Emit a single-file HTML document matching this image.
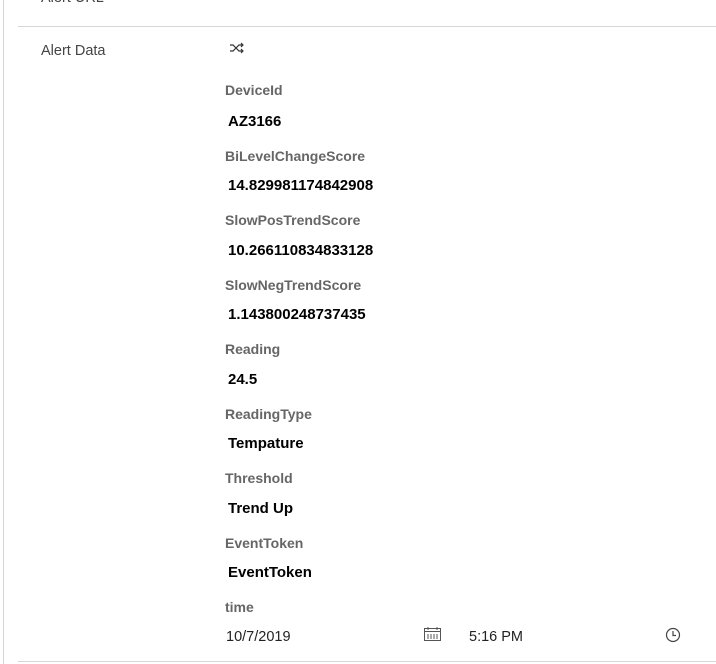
<!DOCTYPE html>
<html><head><style>
body{margin:0;width:716px;height:664px;background:#fff;font-family:"Liberation Sans",sans-serif;position:relative;overflow:hidden}
.a{position:absolute;white-space:nowrap;line-height:16px}
.l{left:225px;font-size:14px;color:#666;font-weight:600}
.v{left:228px;font-size:15px;color:#000;font-weight:bold}
</style></head><body>
<div style="position:absolute;left:3px;top:0;width:1px;height:664px;background:#d4d4d4"></div>
<div style="position:absolute;left:18px;top:26px;width:698px;height:1px;background:#d8d8d8"></div>
<div style="position:absolute;left:18px;top:661px;width:698px;height:1px;background:#d8d8d8"></div>
<div class="a" style="left:41px;top:-10px;font-size:14.5px;color:#444">Alert URL</div>
<div class="a" style="left:41px;top:43px;font-size:14.5px;color:#444">Alert Data</div>
<svg class="a" style="left:229px;top:42px" width="16" height="12" viewBox="0 0 16 12" fill="none" stroke="#333" stroke-width="1.2"><path d="M1 3h3l6 6h4M1 9h3l6-6h4M12 1l2 2-2 2M12 7l2 2-2 2"/></svg>
<div class="a l" style="top:82px">DeviceId</div><div class="a v" style="top:114px">AZ3166</div>
<div class="a l" style="top:148px">BiLevelChangeScore</div><div class="a v" style="top:178px">14.829981174842908</div>
<div class="a l" style="top:212px">SlowPosTrendScore</div><div class="a v" style="top:243px">10.266110834833128</div>
<div class="a l" style="top:277px">SlowNegTrendScore</div><div class="a v" style="top:307px">1.143800248737435</div>
<div class="a l" style="top:341px">Reading</div><div class="a v" style="top:372px">24.5</div>
<div class="a l" style="top:406px">ReadingType</div><div class="a v" style="top:436px">Tempature</div>
<div class="a l" style="top:470px">Threshold</div><div class="a v" style="top:501px">Trend Up</div>
<div class="a l" style="top:535px">EventToken</div><div class="a v" style="top:565px">EventToken</div>
<div class="a l" style="top:599px">time</div>
<div class="a" style="left:226px;top:629px;font-size:14.5px;color:#222">10/7/2019</div>
<svg class="a" style="left:423px;top:626px" width="19" height="16" viewBox="0 0 19 16" fill="none" stroke="#555" stroke-width="1"><rect x="1.5" y="2.5" width="16" height="12"/><path d="M1.5 5.5h16M5 1v3M14 1v3M5 8v5M8 8v5M11 8v5M14 8v5"/></svg>
<div class="a" style="left:469px;top:629px;font-size:14.5px;color:#222">5:16 PM</div>
<svg class="a" style="left:665px;top:627px" width="16" height="16" viewBox="0 0 16 16" fill="none" stroke="#444" stroke-width="1.2"><circle cx="8" cy="8" r="6.5"/><path d="M8 4v4.5h3"/></svg>
</body></html>
